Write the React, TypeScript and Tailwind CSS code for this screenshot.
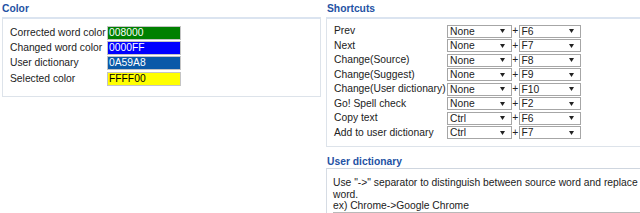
import React from "react";

const colors = [
  { label: "Corrected word color", hex: "008000", bg: "bg-[#008000]", fg: "text-white" },
  { label: "Changed word color", hex: "0000FF", bg: "bg-[#0000ff]", fg: "text-white" },
  { label: "User dictionary", hex: "0A59A8", bg: "bg-[#0a59a8]", fg: "text-white" },
  { label: "Selected color", hex: "FFFF00", bg: "bg-[#ffff00]", fg: "text-black" },
];

const shortcuts = [
  { label: "Prev", mod: "None", key: "F6" },
  { label: "Next", mod: "None", key: "F7" },
  { label: "Change(Source)", mod: "None", key: "F8" },
  { label: "Change(Suggest)", mod: "None", key: "F9" },
  { label: "Change(User dictionary)", mod: "None", key: "F10" },
  { label: "Go! Spell check", mod: "None", key: "F2" },
  { label: "Copy text", mod: "Ctrl", key: "F6" },
  { label: "Add to user dictionary", mod: "Ctrl", key: "F7" },
];

function Select({ value, w }: { value: string; w: string }) {
  return (
    <div
      className={`${w} h-[13px] border border-[#a6a6a6] bg-white flex items-center justify-between pl-[2px] pr-[6px] leading-[11px]`}
    >
      <span>{value}</span>
      <svg width="5" height="4" viewBox="0 0 5 4">
        <path d="M0 0 L5 0 L2.5 4 Z" fill="#222" />
      </svg>
    </div>
  );
}

export default function App() {
  return (
    <div
      className="w-[640px] h-[213px] overflow-hidden bg-white text-[#222] text-[10.3px] flex items-start pl-[2px] gap-[5px]"
      style={{ fontFamily: '"Liberation Sans", Arial, sans-serif' }}
    >
      <div className="w-[319px] shrink-0 flex flex-col">
        <div className="shrink-0 h-[17px] pt-[3px] leading-[12px] font-bold text-[#2452a4]">Color</div>
        <div className="shrink-0 h-[80px] border border-[#dde3ea] border-t-2 border-t-[#dbe4f0] pt-[6px] pl-[7px]">
          {colors.map((c) => (
            <div key={c.hex} className="h-[15.33px] flex items-center">
              <div className="w-[97px] leading-[12px]">{c.label}</div>
              <div
                className={`w-[74px] h-[14px] border border-[#c4c4c4] ${c.bg} ${c.fg} pl-[1px] leading-[12px]`}
              >
                {c.hex}
              </div>
            </div>
          ))}
        </div>
      </div>
      <div className="w-[326px] shrink-0 flex flex-col">
        <div className="shrink-0 h-[17px] pt-[3px] pl-[1px] leading-[12px] font-bold text-[#2452a4]">Shortcuts</div>
        <div className="shrink-0 h-[130px] border border-[#dde3ea] border-t-2 border-t-[#dbe4f0] pt-[5px] pl-[7px]">
          {shortcuts.map((s) => (
            <div key={s.label} className="h-[14.5px] flex items-center">
              <div className="w-[113px] leading-[12px] whitespace-nowrap">{s.label}</div>
              <Select value={s.mod} w="w-[65px]" />
              <div className="w-[6.5px] text-center leading-[12px]">+</div>
              <Select value={s.key} w="w-[62px]" />
            </div>
          ))}
        </div>
        <div className="shrink-0 h-[21px] pt-[9px] pl-[1px] leading-[12px] font-bold text-[#2452a4]">User dictionary</div>
        <div className="shrink-0 border border-[#d6dce4] border-t-[#cfd6df] pt-[8px] px-[6px] w-[326px]">
          <div className="leading-[11.5px]">
            Use "-&gt;" separator to distinguish between source word and replace word.
            <br />
            ex) Chrome-&gt;Google Chrome
          </div>
          <div className="border-t border-[#b9b9b9] h-[6px]" />
        </div>
      </div>
    </div>
  );
}
